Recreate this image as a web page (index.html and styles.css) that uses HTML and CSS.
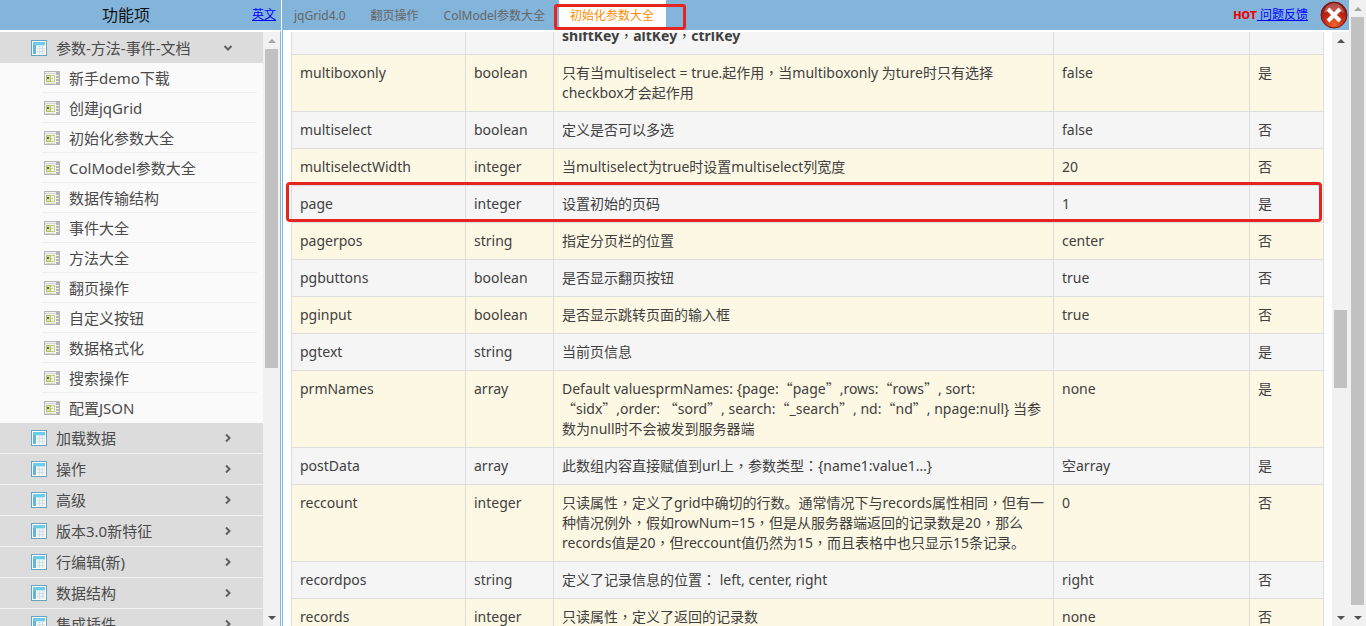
FILE: index.html
```html
<!DOCTYPE html>
<html lang="zh-CN">
<head>
<meta charset="utf-8">
<title>jqGrid</title>
<link rel="stylesheet" href="styles.css">
</head>
<body>
<svg class="defs" aria-hidden="true">
  <symbol id="book" viewBox="0 0 16 16">
    <rect x=".5" y=".5" width="15" height="15" fill="#fff" stroke="#6aa2c0"/>
    <path d="M2 2h12v3H2z" fill="#6ccbe8"/><path d="M2 5h3v9H2z" fill="#5bb9e0"/>
    <path d="M6 6h8v8H6z" fill="#eef3f1"/><path d="M6 8.500h8M6 11.500h8M8.500 6v8M11.500 6v8" stroke="#c9dadc" stroke-width=".7"/>
    <path d="M5 5.500h9" stroke="#c4e9f4"/>
  </symbol>
  <symbol id="page" viewBox="0 0 16 16">
    <rect x=".5" y="1.500" width="15" height="13" fill="#f4f4f4" stroke="#b3b3b8"/>
    <path d="M1 3.500h14" stroke="#d6d6da"/><path d="M12 2h3v12h-3z" fill="#b4b4bb"/><path d="M12 5.500h3M12 8.500h3M12 11.500h3" stroke="#eee"/>
    <rect x="2.500" y="5.500" width="4" height="6" fill="#dbe59a" stroke="#b3c167"/><path d="M3 7h2v2H3z" fill="#59664a"/>
    <path d="M7 5.500h4M10.500 5v6M7 8.500h2M7 11.500h4" stroke="#c6d27a"/><path d="M2 13.500h9" stroke="#d5dcc0"/>
  </symbol>
  <symbol id="right" viewBox="0 0 10 10"><path d="M3 1.500 6.500 5 3 8.500" fill="none" stroke="#606060" stroke-width="2"/></symbol>
  <symbol id="down" viewBox="0 0 10 10"><path d="M1.500 3 5 6.500 8.500 3" fill="none" stroke="#606060" stroke-width="2"/></symbol>
  <symbol id="tri-up" viewBox="0 0 8 4"><path d="M0 4 4 0l4 4z" fill="currentColor"/></symbol>
  <symbol id="tri-down" viewBox="0 0 8 4"><path d="M0 0h8L4 4z" fill="currentColor"/></symbol>
</svg>
<div class="app">
  <aside class="sidebar">
    <header class="side-head"><h1>功能项</h1><a href="#en">英文</a></header>
    <div class="pane">
      <nav class="menu">
        <button class="group open"><svg class="ico"><use href="#book"/></svg><span>参数-方法-事件-文档</span><svg class="chev"><use href="#down"/></svg></button>
        <ul>
          <li><a href="#a"><svg class="ico"><use href="#page"/></svg>新手demo下载</a></li>
          <li><a href="#a"><svg class="ico"><use href="#page"/></svg>创建jqGrid</a></li>
          <li><a href="#a"><svg class="ico"><use href="#page"/></svg>初始化参数大全</a></li>
          <li><a href="#a"><svg class="ico"><use href="#page"/></svg>ColModel参数大全</a></li>
          <li><a href="#a"><svg class="ico"><use href="#page"/></svg>数据传输结构</a></li>
          <li><a href="#a"><svg class="ico"><use href="#page"/></svg>事件大全</a></li>
          <li><a href="#a"><svg class="ico"><use href="#page"/></svg>方法大全</a></li>
          <li><a href="#a"><svg class="ico"><use href="#page"/></svg>翻页操作</a></li>
          <li><a href="#a"><svg class="ico"><use href="#page"/></svg>自定义按钮</a></li>
          <li><a href="#a"><svg class="ico"><use href="#page"/></svg>数据格式化</a></li>
          <li><a href="#a"><svg class="ico"><use href="#page"/></svg>搜索操作</a></li>
          <li><a href="#a"><svg class="ico"><use href="#page"/></svg>配置JSON</a></li>
        </ul>
        <button class="group"><svg class="ico"><use href="#book"/></svg><span>加载数据</span><svg class="chev"><use href="#right"/></svg></button>
        <button class="group"><svg class="ico"><use href="#book"/></svg><span>操作</span><svg class="chev"><use href="#right"/></svg></button>
        <button class="group"><svg class="ico"><use href="#book"/></svg><span>高级</span><svg class="chev"><use href="#right"/></svg></button>
        <button class="group"><svg class="ico"><use href="#book"/></svg><span>版本3.0新特征</span><svg class="chev"><use href="#right"/></svg></button>
        <button class="group"><svg class="ico"><use href="#book"/></svg><span>行编辑(新)</span><svg class="chev"><use href="#right"/></svg></button>
        <button class="group"><svg class="ico"><use href="#book"/></svg><span>数据结构</span><svg class="chev"><use href="#right"/></svg></button>
        <button class="group"><svg class="ico"><use href="#book"/></svg><span>集成插件</span><svg class="chev"><use href="#right"/></svg></button>
      </nav>
      <div class="scroll side-scroll"><svg class="dim"><use href="#tri-up"/></svg><div class="track"><i></i></div><svg><use href="#tri-down"/></svg></div>
    </div>
  </aside>
  <main class="main">
    <header class="tabs">
      <nav><a href="#t">jqGrid4.0</a><a href="#t">翻页操作</a><a href="#t">ColModel参数大全</a><a href="#t" class="active">初始化参数大全</a></nav>
      <div class="feedback"><b>HOT</b><a href="#f">&nbsp;问题反馈</a></div>
      <button class="close" aria-label="关闭"><svg viewBox="0 0 28 28"><defs><radialGradient id="red" cx=".5" cy=".85" r=".8"><stop offset="0" stop-color="#f0642c"/><stop offset=".5" stop-color="#c42a14"/><stop offset="1" stop-color="#8c120c"/></radialGradient></defs><circle cx="14" cy="14" r="13" fill="url(#red)" stroke="#761710"/><path d="M4 12a10 10 0 0 1 20 0q-10-5-20 0" fill="#fff" opacity=".25"/><path d="m8 8 12 12M20 8 8 20" stroke="#fff" stroke-width="4"/></svg></button>
    </header>
    <div class="pane">
      <div class="content">
        <table>
          <colgroup><col class="c1"><col class="c2"><col class="c3"><col class="c4"><col class="c5"></colgroup>
          <tbody>
          <tr><td></td><td></td><td><b>shiftKey</b><i lang="zh-TW">，</i><b>altKey</b><i lang="zh-TW">，</i><b>ctrlKey</b></td><td></td><td></td></tr>
          <tr><td>multiboxonly</td><td>boolean</td><td>只有当multiselect = true.起作用<i lang="zh-TW">，</i>当multiboxonly 为ture时只有选择checkbox才会起作用</td><td>false</td><td>是</td></tr>
          <tr><td>multiselect</td><td>boolean</td><td>定义是否可以多选</td><td>false</td><td>否</td></tr>
          <tr><td>multiselectWidth</td><td>integer</td><td>当multiselect为true时设置multiselect列宽度</td><td>20</td><td>否</td></tr>
          <tr class="marked"><td>page</td><td>integer</td><td>设置初始的页码</td><td>1</td><td>是</td></tr>
          <tr><td>pagerpos</td><td>string</td><td>指定分页栏的位置</td><td>center</td><td>否</td></tr>
          <tr><td>pgbuttons</td><td>boolean</td><td>是否显示翻页按钮</td><td>true</td><td>否</td></tr>
          <tr><td>pginput</td><td>boolean</td><td>是否显示跳转页面的输入框</td><td>true</td><td>否</td></tr>
          <tr><td>pgtext</td><td>string</td><td>当前页信息</td><td></td><td>是</td></tr>
          <tr><td>prmNames</td><td>array</td><td>Default valuesprmNames: {page:<q>“</q>page<q>”</q>,rows:<q>“</q>rows<q>”</q>, sort: <q>“</q>sidx<q>”</q>,order: <q>“</q>sord<q>”</q>, search:<q>“</q>_search<q>”</q>, nd:<q>“</q>nd<q>”</q>, npage:null} 当参数为null时不会被发到服务器端</td><td>none</td><td>是</td></tr>
          <tr><td>postData</td><td>array</td><td>此数组内容直接赋值到url上<i lang="zh-TW">，</i>参数类型<i lang="zh-TW">：</i>{name1:value1…}</td><td>空array</td><td>是</td></tr>
          <tr><td>reccount</td><td>integer</td><td>只读属性<i lang="zh-TW">，</i>定义了grid中确切的行数。通常情况下与records属性相同<i lang="zh-TW">，</i>但有一种情况例外<i lang="zh-TW">，</i>假如rowNum=15<i lang="zh-TW">，</i>但是从服务器端返回的记录数是20<i lang="zh-TW">，</i>那么records值是20<i lang="zh-TW">，</i>但reccount值仍然为15<i lang="zh-TW">，</i>而且表格中也只显示15条记录。</td><td>0</td><td>否</td></tr>
          <tr><td>recordpos</td><td>string</td><td>定义了记录信息的位置<i lang="zh-TW">：</i> left, center, right</td><td>right</td><td>否</td></tr>
          <tr><td>records</td><td>integer</td><td>只读属性<i lang="zh-TW">，</i>定义了返回的记录数</td><td>none</td><td>否</td></tr>
          </tbody>
        </table>
      </div>
      <div class="scroll main-scroll"><svg><use href="#tri-up"/></svg><div class="track"><i></i></div><svg><use href="#tri-down"/></svg></div>
    </div>
  </main>
  <div class="scroll page-scroll"><svg class="dim"><use href="#tri-up"/></svg><div class="track"><i></i></div><svg><use href="#tri-down"/></svg></div>
</div>
</body>
</html>
```
FILE: styles.css
```css
* { box-sizing: border-box; }
body { margin: 0; overflow: hidden; font: 14px/20px "Noto Sans", "Noto Sans CJK SC", sans-serif; color: #404040; background: #fff; }
a { color: inherit; text-decoration: none; }
button { font: inherit; color: inherit; border: 0; padding: 0; background: none; }
.defs { position: absolute; width: 0; height: 0; }
.app { display: flex; height: 100vh; overflow: hidden; }
.sidebar { flex: none; width: 283px; display: flex; flex-direction: column; padding-right: 1px; border-right: 1px solid #83b4da; }
.side-head { display: flex; align-items: center; height: 30px; padding-right: 5px; background: #83b4da; color: #111; }
.side-head h1 { flex: 1; margin: 0; text-align: center; font-size: 16px; font-weight: 400; }
.side-head a, .feedback a { color: #00f; font-size: 12px; text-decoration: underline; }
.pane { flex: 1; min-height: 0; display: flex; border-top: 2px solid #fff; overflow: hidden; }
.sidebar .pane { border-right: 1px solid #83b4da; }
.menu { flex: 1; overflow: hidden; background: #fafafa; font-size: 15px; color: #4a4a4a; }
.menu ul { list-style: none; margin: 0; padding: 0 6px 0 42px; }
.menu li a { display: flex; align-items: center; gap: 9px; height: 30px; padding-left: 2px; border-bottom: 1px solid #eee; }
.menu li:last-child a { border-color: transparent; }
.ico { width: 16px; height: 16px; flex: none; }
.group { display: flex; align-items: center; gap: 9px; width: 100%; height: 31px; padding: 0 30px 0 31px; background: #dcdcdc; text-align: left; border-bottom: 1px solid #f0f0f0; }
.group.open { border-bottom: 0; }
.group span { flex: 1; }
.chev { width: 10px; height: 10px; }
.scroll { flex: none; width: 17px; display: flex; flex-direction: column; align-items: center; background: #f1f1f1; color: #505050; }
.scroll svg { flex: none; width: 8px; height: 4px; margin: 7px 0 6px; }
.scroll .dim { color: #a3a3a3; }
.track { flex: 1; width: 13px; display: flex; flex-direction: column; }
.track i { background: #c1c1c1; }
.side-scroll i { height: 57%; }
.main-scroll .track { padding-top: 261px; }
.main-scroll i { height: 78px; }
.page-scroll .track { padding-bottom: 4px; }
.page-scroll i { height: 100%; }
.main { flex: 1; min-width: 0; display: flex; flex-direction: column; }
.tabs { display: flex; align-items: center; height: 30px; background: #83b4da; font-size: 12px; }
.tabs nav { flex: 1; display: flex; gap: 1px; color: #666; }
.tabs nav a { height: 30px; padding: 6px 12px 4px 11px; }
.tabs nav a:not(.active) { padding-right: 13px; }
.tabs nav .active { position: relative; height: 27px; background: #fff; color: #ff8c00; }
.active::after { content: ""; position: absolute; inset: 4px -20px -3px -5px; border: 3px solid #e52620; border-radius: 3px; z-index: 2; }
.feedback { margin-right: 12px; }
.feedback b { color: #e00; font: bold 10px/20px "DejaVu Sans", sans-serif; }
.close { width: 28px; height: 28px; margin-right: 1px; }
.close svg { display: block; width: 28px; height: 28px; }
.content { flex: 1; padding: 0 8px; overflow: hidden; }
table { width: 100%; margin-top: -15px; table-layout: fixed; border-spacing: 0; border-right: 1px solid #ddd; }
.c1 { width: 174px; } .c2 { width: 88px; } .c4 { width: 196px; } .c5 { width: 74px; }
tr { background: #fdf8e4; }
tr:nth-child(odd) { background: #f5f5f5; }
td { height: 37px; padding: 8px; border: 1px solid #ddd; border-width: 1px 0 0 1px; vertical-align: top; }
q { quotes: none; font-family: "Noto Sans CJK SC", sans-serif; line-height: 16px; }
td i { font-style: normal; font-family: "Noto Sans CJK TC", sans-serif; line-height: 16px; }
.marked { position: relative; }
.marked td:first-child::after { content: ""; position: absolute; inset: -3px 1px 0 -5px; border: 3px solid #e52620; border-radius: 4px; }
```
